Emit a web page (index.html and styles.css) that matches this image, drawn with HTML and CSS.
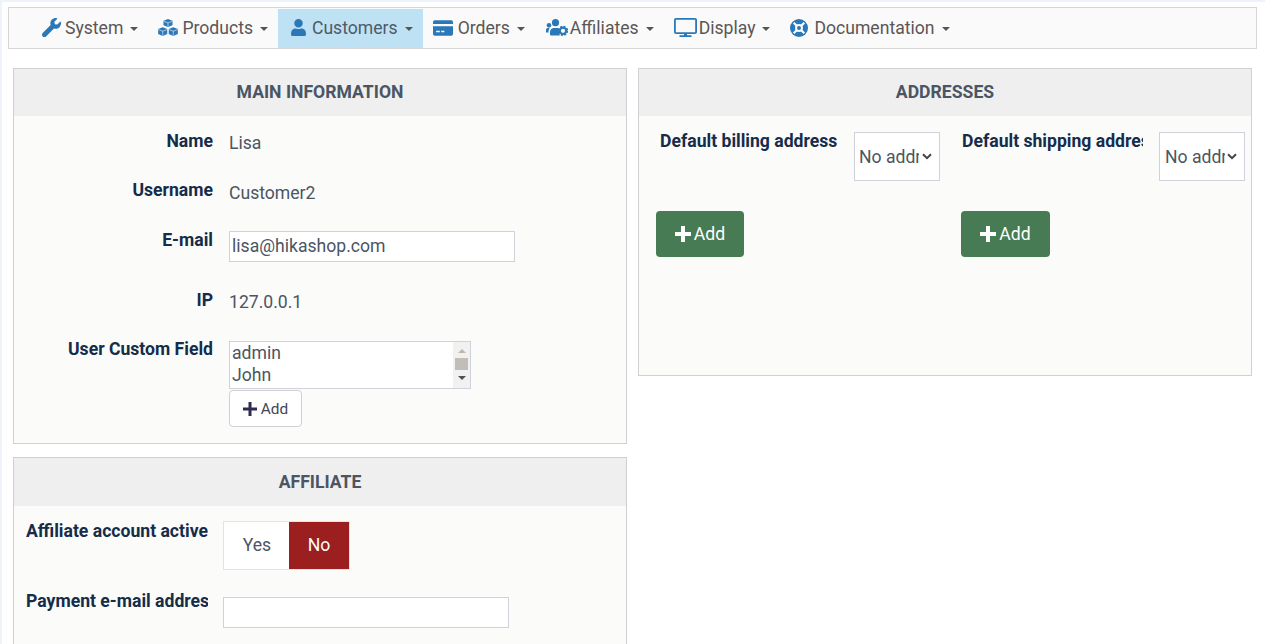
FILE: index.html
```html
<!DOCTYPE html>
<html lang="en">
<head>
<meta charset="utf-8">
<title>Customer</title>
<link rel="stylesheet" href="styles.css">
</head>
<body>
<div class="page">
  <nav class="nav">
    <a class="nav-item item-system"><svg class="ic" viewBox="0 0 512 512" width="19" height="19"><path d="M507.700 109.100c-2.200-9-13.500-12.100-20.100-5.500l-74.400 74.400-67.900-11.300-11.300-67.900 74.400-74.400c6.600-6.600 3.400-17.900-5.700-20.200-47.400-11.700-99.500 1-136.400 37.900-39.500 39.500-50.400 97.200-33.500 147L18.700 404.700c-25 25-25 65.500 0 90.500 25 25 65.500 25 90.500 0l214.200-214.200c49.900 16.600 107.500 5.700 147.300-34.100 37-37 49.700-89.200 37-137.800z"/></svg>System<i class="caret"></i></a>
    <a class="nav-item item-products"><svg class="ic" viewBox="1 0 26 22.500" width="20" height="17"><path d="M14 0l6 2.300v6L14 10.600 8 8.300v-6zM7 11l6 2.300v6.400L7 22.500 1 19.700v-6.400zM21 11l6 2.300v6.400l-6 2.800-6-2.800v-6.400z"/><path class="cut" d="M8.500 3L14 5.200 19.500 3M1.500 14L7 16.200 12.500 14M15.500 14L21 16.200 26.500 14M14 5.200V10M7 16.200V22M21 16.200V22"/></svg>Products<i class="caret"></i></a>
    <a class="nav-item active item-customers"><svg class="ic" viewBox="0 0 448 512" width="15" height="17"><path d="M224 256c70.700 0 128-57.300 128-128S294.700 0 224 0 96 57.300 96 128s57.300 128 128 128zm89.600 32h-16.700c-22.200 10.200-46.900 16-72.900 16s-50.600-5.800-72.900-16h-16.700C60.200 288 0 348.200 0 422.400V464c0 26.500 21.500 48 48 48h352c26.500 0 48-21.500 48-48v-41.600c0-74.200-60.200-134.400-134.400-134.400z"/></svg>Customers<i class="caret"></i></a>
    <a class="nav-item item-orders"><svg class="ic" viewBox="0 0 22 17" width="20" height="16"><path fill-rule="evenodd" d="M2 0h18a2 2 0 0 1 2 2v2H0V2a2 2 0 0 1 2-2zM0 6.500h22V15a2 2 0 0 1-2 2H2a2 2 0 0 1-2-2zM3.500 11.500v1.800h4v-1.800zM9 11.500v1.800h3.500v-1.800z"/></svg>Orders<i class="caret"></i></a>
    <a class="nav-item item-affiliates"><svg class="ic" viewBox="0 0 22 17" width="22" height="17"><circle cx="9.500" cy="3.700" r="3.600"/><circle cx="3" cy="6.300" r="2.300"/><path d="M0 13.500v-2.500c0-1.300 1.200-2.200 2.500-2.200h1.300C3 9.800 2.500 11.500 2.500 13.500zM4 15.500v-2.500C4 10.500 6 9 8 9h3.500c.9 0 1.500.2 2 .6l-.7 2.200 1 1.600-.3 2.600.6 .5H5a1 1 0 0 1-1-1z"/><circle class="gear-ring" cx="17" cy="11.800" r="3.200"/><circle class="gear-teeth" cx="17" cy="11.800" r="4.300"/></svg>Affiliates<i class="caret"></i></a>
    <a class="nav-item item-display"><svg class="ic" viewBox="0 0 23 19" width="23" height="19"><path fill-rule="evenodd" d="M2 0h19a2 2 0 0 1 2 2v12a2 2 0 0 1-2 2H2a2 2 0 0 1-2-2V2a2 2 0 0 1 2-2zM1.800 1.800v12.400h19.400V1.800z"/><path d="M10 16h3v1.500h-3zM5.500 17.300h12V19h-12z"/></svg>Display<i class="caret"></i></a>
    <a class="nav-item item-docs"><svg class="ic" viewBox="0 0 512 512" width="18" height="18"><circle cx="256" cy="256" r="256"/><path class="ring-cut" d="M105 105L407 407M407 105L105 407"/><circle class="ring-hole" cx="256" cy="256" r="112"/><circle cx="256" cy="256" r="56"/></svg>Documentation<i class="caret"></i></a>
  </nav>

  <div class="columns">
    <div class="col">
      <section class="panel panel-main">
        <h2 class="panel-title">MAIN INFORMATION</h2>
        <div class="rows">
          <div class="row row-name"><div class="label">Name</div><div class="value">Lisa</div></div>
          <div class="row row-user"><div class="label">Username</div><div class="value">Customer2</div></div>
          <div class="row row-mail"><div class="label">E-mail</div><input class="input" type="text" value="lisa@hikashop.com"></div>
          <div class="row row-ip"><div class="label">IP</div><div class="value">127.0.0.1</div></div>
          <div class="row row-custom">
            <div class="label">User Custom Field</div>
            <div class="field-stack">
              <div class="listbox">
                <div class="options"><div>admin</div><div>John</div></div>
                <div class="scroll"><i class="arrow-up"></i><i class="thumb"></i><i class="arrow-down"></i></div>
              </div>
              <button class="btn-light" type="button"><svg class="plus" viewBox="0 0 14 14" width="14" height="14"><path d="M5.500 0h3v5.500H14v3H8.500V14h-3V8.500H0v-3h5.500z"/></svg>Add</button>
            </div>
          </div>
        </div>
      </section>
      <section class="panel panel-aff">
        <h2 class="panel-title">AFFILIATE</h2>
        <div class="aff-rows">
          <div class="aff-row aff-active">
            <div class="aff-label">Affiliate account active</div>
            <div class="toggle"><span class="toggle-yes">Yes</span><span class="toggle-no">No</span></div>
          </div>
          <div class="aff-row aff-mail">
            <div class="aff-label">Payment e-mail address</div>
            <input class="input" type="text">
          </div>
        </div>
      </section>
    </div>
    <div class="col">
      <section class="panel panel-addr">
        <h2 class="panel-title">ADDRESSES</h2>
        <div class="addr-grid">
          <div class="addr addr-bill">
            <div class="addr-top">
              <div class="addr-label">Default billing address</div>
              <div class="fake-select"><span class="fs-text">No address</span><svg class="chev" viewBox="0 0 10 7" width="10" height="7"><path d="M1 1.200l4 4 4-4"/></svg></div>
            </div>
            <button class="btn-green" type="button"><svg class="plus-w" viewBox="0 0 16 16" width="16" height="16"><path d="M6 0h4v6h6v4h-6v6H6v-6H0V6h6z"/></svg>Add</button>
          </div>
          <div class="addr addr-ship">
            <div class="addr-top">
              <div class="addr-label">Default shipping address</div>
              <div class="fake-select"><span class="fs-text">No address</span><svg class="chev" viewBox="0 0 10 7" width="10" height="7"><path d="M1 1.200l4 4 4-4"/></svg></div>
            </div>
            <button class="btn-green" type="button"><svg class="plus-w" viewBox="0 0 16 16" width="16" height="16"><path d="M6 0h4v6h6v4h-6v6H6v-6H0V6h6z"/></svg>Add</button>
          </div>
        </div>
      </section>
    </div>
  </div>
</div>
</body>
</html>
```

FILE: styles.css
```css
* { box-sizing: border-box; }
html, body { margin: 0; height: 100%; }
body {
  height: 644px;
  overflow: hidden;
  background: #fff;
  font-family: Roboto, "Liberation Sans", sans-serif;
  font-size: 17.6px;
  color: #4b5563;
  border-left: 2px solid #edf3f8;
  border-top: 2px solid #edf3f8;
}
.page { padding: 5px 6px 0 6px; }

.nav {
  height: 42px;
  width: 1249px;
  border: 1px solid #d6d6d6;
  background: #fafafa;
  display: flex;
  align-items: stretch;
  padding: 1px 0 0 23px;
}
.nav-item {
  display: flex;
  align-items: center;
  padding: 0 10px 2px;
  color: #5b5656;
  font-size: 17.6px;
  white-space: nowrap;
}
.nav-item.active { background: #bfe1f4; color: #4d5a68; padding-left: 13px; }
.ic { fill: #2a78b8; flex: none; margin-right: 4px; }
.cut { fill: none; stroke: #fafafa; stroke-width: 0.8; }
.gear-ring { fill: none; stroke: #2a78b8; stroke-width: 2.200; }
.gear-teeth { fill: none; stroke: #2a78b8; stroke-width: 1.800; stroke-dasharray: 1.900 1.480; }
.ring-cut { fill: none; stroke: #fafafa; stroke-width: 62; }
.ring-hole { fill: #fafafa; }
.caret {
  display: inline-block;
  width: 0; height: 0;
  margin-left: 7px;
  margin-top: 3px;
  border-left: 4.5px solid transparent;
  border-right: 4.5px solid transparent;
  border-top: 4.500px solid #555;
}
.item-system { padding-right: 9px; }
.item-products { padding-left: 11px; }
.item-products .ic { margin-right: 4px; }
.item-customers .ic { margin-right: 6px; }
.item-orders { padding-right: 11px; }
.item-orders .ic { margin-right: 5px; }
.item-affiliates .ic { margin-right: 2px; }
.item-display .ic { margin-right: 2px; }
.item-docs .ic { margin-right: 6px; }

.columns {
  display: flex;
  align-items: flex-start;
  gap: 11px;
  margin-top: 19px;
  margin-left: 5px;
}
.col { width: 614px; display: flex; flex-direction: column; gap: 13px; flex: none; }
.panel { border: 1px solid #cfcfd4; background: #fbfbf9; }
.panel-title {
  margin: 0;
  height: 47px;
  line-height: 46px;
  background: #efefef;
  text-align: center;
  font-size: 17.6px;
  font-weight: 700;
  color: #4b5563;
}
.panel-aff .panel-title { height: 48px; line-height: 48px; }
.panel-main { height: 376px; }
.panel-aff { height: 300px; }
.panel-addr { height: 308px; }

.rows { display: flex; flex-direction: column; }
.row { display: flex; align-items: flex-start; }
.label {
  width: 199px;
  text-align: right;
  font-weight: 700;
  color: #152c4a;
  margin-right: 16px;
  font-size: 17.6px;
  line-height: 21px;
  flex: none;
}
.value { line-height: 21px; padding-top: 2px; }
.row-name { margin-top: 15px; height: 50px; }
.row-user { height: 50px; }
.row-mail { height: 59px; }
.row-ip { height: 51px; }
.row-user .label, .row-mail .label { margin-top: -1px; }
.row-custom .label { margin-top: -2px; }
.input {
  width: 286px;
  height: 31px;
  border: 1px solid #cfd2da;
  background: #fff;
  padding: 0 2px 2px;
  font: 17.6px Roboto, "Liberation Sans", sans-serif;
  color: #4b5563;
  border-radius: 0;
  outline: none;
}
.field-stack { display: flex; flex-direction: column; align-items: flex-start; gap: 1px; }
.listbox {
  width: 242px;
  height: 48px;
  border: 1px solid #cfd2da;
  background: #fff;
  display: flex;
}
.options { flex: 1; padding: 0 2px; line-height: 22px; }
.scroll {
  width: 17px;
  background: #f1f1f1;
  display: flex;
  flex-direction: column;
  align-items: center;
  padding-top: 7px;
}
.arrow-up { width: 0; height: 0; border-left: 4px solid transparent; border-right: 4px solid transparent; border-bottom: 4px solid #bfb8a5; }
.thumb { width: 13px; height: 12px; background: #c1bdb9; margin-top: 5px; }
.arrow-down { width: 0; height: 0; border-left: 4px solid transparent; border-right: 4px solid transparent; border-top: 4px solid #505058; margin-top: 6px; }
.btn-light {
  width: 73px;
  height: 37px;
  border: 1px solid #cfcfd4;
  border-radius: 4px;
  background: #fff;
  color: #3f4756;
  font: 15.4px Roboto, "Liberation Sans", sans-serif;
  display: flex;
  align-items: center;
  justify-content: center;
  padding: 0;
}
.plus { fill: #2c2c4e; margin-right: 4px; }

.aff-rows { display: flex; flex-direction: column; }
.aff-row { display: flex; align-items: flex-start; padding-left: 12px; }
.aff-label {
  width: 182px;
  overflow: hidden;
  white-space: nowrap;
  font-weight: 700;
  font-size: 17.6px;
  line-height: 21px;
  color: #152c4a;
  margin-right: 15px;
  flex: none;
}
.aff-active { margin-top: 15px; height: 70px; }
.aff-mail { height: 60px; }
.aff-mail .input { margin-top: 6px; }
.toggle { display: flex; height: 49px; border: 1px solid #e4e4e4; margin-top: 0; font-size: 17.6px; }
.toggle-yes { width: 65px; padding-left: 1px; background: #fff; text-align: center; line-height: 47px; color: #4b5563; }
.toggle-no { width: 60px; background: #9b1f1f; color: #fff; text-align: center; line-height: 47px; }

.addr-grid { display: flex; }
.addr { width: 305px; flex: none; padding-left: 17px; }
.addr-top { display: flex; align-items: flex-start; margin-top: 16px; height: 79px; }
.addr-label {
  overflow: hidden;
  white-space: nowrap;
  font-weight: 700;
  font-size: 17.6px;
  line-height: 21px;
  color: #152c4a;
  flex: none;
  margin-top: -1px;
  margin-left: 4px;
}
.addr-bill .addr-label { width: 178px; margin-right: 16px; }
.addr-ship .addr-label { width: 181px; margin-left: 1px; margin-right: 16px; }
.fake-select {
  width: 86px;
  height: 49px;
  border: 1px solid #cfd2da;
  background: #fff;
  display: flex;
  align-items: center;
  padding-left: 4px;
  flex: none;
}
.addr-ship .fake-select { padding-left: 5px; }
.fs-text { width: 60px; overflow: hidden; white-space: nowrap; }
.chev { fill: none; stroke: #444; stroke-width: 2; margin-left: 3px; }
.addr-ship .chev { margin-left: 2px; }
.btn-green {
  width: 88px;
  height: 46px;
  border: 0;
  border-radius: 4px;
  background: #467b53;
  color: #fff;
  font: 17.6px Roboto, "Liberation Sans", sans-serif;
  display: flex;
  align-items: center;
  justify-content: center;
  padding: 0;
}
.addr-ship .btn-green { width: 89px; }
.plus-w { fill: #fff; margin-right: 3px; }
```
